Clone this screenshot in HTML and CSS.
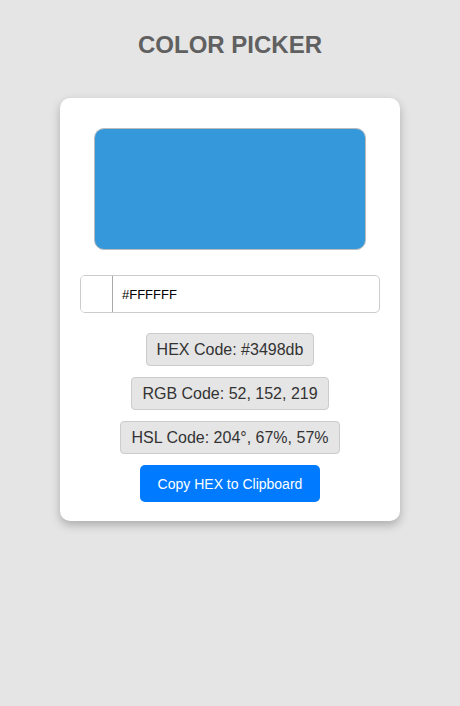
FILE: index.html
```html
<!DOCTYPE html>
<html lang="en">
<head>
<meta charset="utf-8">
<title>Color Picker</title>
<link rel="stylesheet" href="styles.css">
</head>
<body>
<h1 class="title">COLOR PICKER</h1>
<div class="card">
  <div class="preview"></div>
  <div class="input-row">
    <div class="swatch"></div>
    <div class="hex-input">#FFFFFF</div>
  </div>
  <div class="codes">
    <div class="code">HEX Code: #3498db</div>
    <div class="code">RGB Code: 52, 152, 219</div>
    <div class="code">HSL Code: 204°, 67%, 57%</div>
    <button class="copy">Copy HEX to Clipboard</button>
  </div>
</div>
</body>
</html>
```
FILE: styles.css
```css
html, body {
  margin: 0;
  padding: 0;
}
body {
  background: #e5e5e5;
  font-family: "Liberation Sans", Arial, sans-serif;
  display: flex;
  flex-direction: column;
  align-items: center;
  min-height: 706px;
}
.title {
  margin: 31px 0 0;
  font-size: 24px;
  font-weight: bold;
  color: #606060;
  line-height: 28px;
}
.card {
  margin-top: 39px;
  width: 300px;
  padding: 30px 20px 19px;
  background: #ffffff;
  border-radius: 10px;
  box-shadow: 0 4px 10px rgba(0, 0, 0, 0.25);
  display: flex;
  flex-direction: column;
  align-items: center;
}
.preview {
  width: 270px;
  height: 120px;
  background: #3498db;
  border: 1px solid #bbbbbb;
  border-radius: 10px;
}
.input-row {
  margin-top: 25px;
  width: 298px;
  height: 36px;
  border: 1px solid #cccccc;
  border-radius: 5px;
  display: flex;
  align-items: stretch;
  overflow: hidden;
}
.swatch {
  width: 31px;
  border-right: 1px solid #aaaaaa;
  background: #ffffff;
}
.hex-input {
  padding-left: 9px;
  display: flex;
  align-items: center;
  font-size: 13px;
  color: #000000;
}
.codes {
  margin-top: 20px;
  display: flex;
  flex-direction: column;
  align-items: center;
  gap: 11px;
}
.code {
  background: #e5e5e5;
  border: 1px solid #cccccc;
  border-radius: 4px;
  padding: 7px 10px;
  font-size: 16px;
  line-height: 17px;
  color: #333333;
}
.copy {
  background: #007bff;
  color: #ffffff;
  border: none;
  border-radius: 5px;
  width: 180px;
  height: 37px;
  font-family: "Liberation Sans", Arial, sans-serif;
  font-size: 14px;
  padding: 0;
}
```
